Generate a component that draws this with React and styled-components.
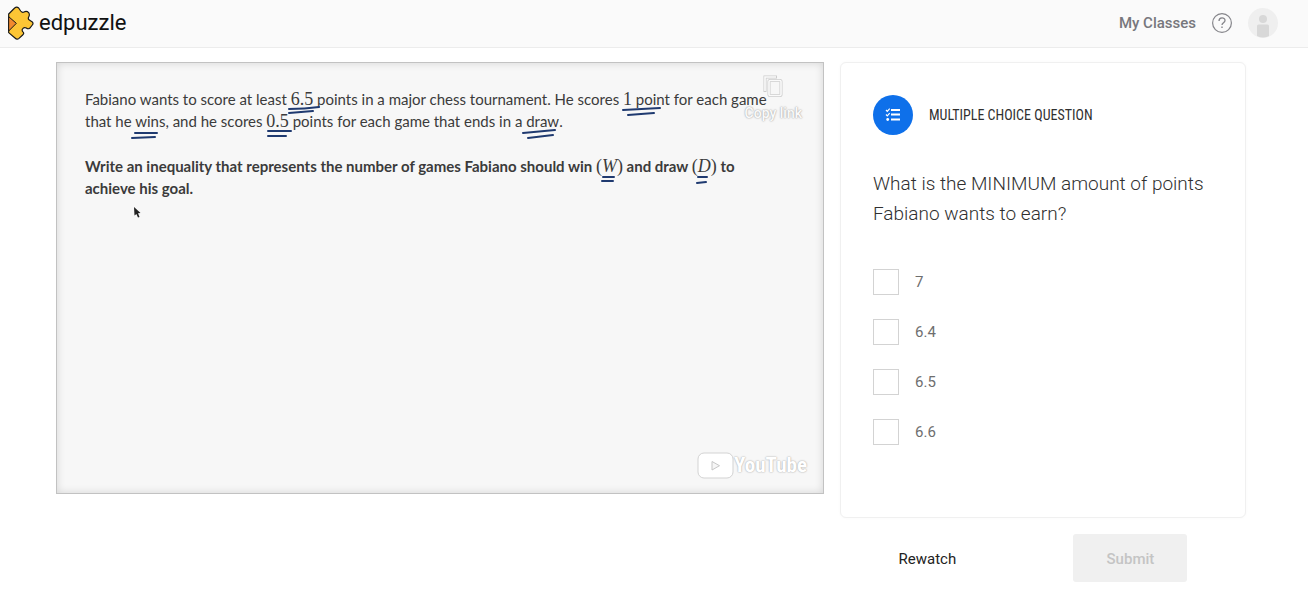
import React, { useState } from 'react';
import styled, { createGlobalStyle } from 'styled-components';

const GlobalStyle = createGlobalStyle`
  * {
    box-sizing: border-box;
  }

  body {
    margin: 0;
    background: #fff;
    color: #303030;
    font-family: Roboto, 'Liberation Sans', sans-serif;
  }
`;

const Header = styled.header`
  display: flex;
  align-items: center;
  justify-content: space-between;
  height: 48px;
  padding: 0 30px 2px 8px;
  background: #fafafa;
  border-bottom: 1px solid #ececec;
`;

const Brand = styled.a`
  display: flex;
  align-items: center;
  gap: 5px;
  color: #111;
  font-size: 22px;
  line-height: 28px;
  text-decoration: none;
`;

const Nav = styled.nav`
  display: flex;
  align-items: center;
  gap: 16px;
`;

const NavLink = styled.a`
  color: #77777d;
  font-size: 15px;
  font-weight: 500;
  text-decoration: none;
`;

const IconButton = styled.button`
  display: flex;
  padding: 0;
  border: 0;
  background: none;
  cursor: pointer;
`;

const Main = styled.main`
  display: grid;
  grid-template-columns: minmax(0, 768fr) minmax(0, 406fr);
  align-items: start;
  gap: 16px;
  padding: 14px 62px 24px 56px;
`;

const Video = styled.section`
  position: relative;
  aspect-ratio: 16 / 9;
  padding: 25px 48px 24px 28px;
  border: 1px solid #c2c2c2;
  background: #f7f7f7;
  box-shadow: inset 0 0 8px rgba(0, 0, 0, 0.14);
`;

const Problem = styled.p`
  margin: 0 0 23px;
  color: #3b3b3b;
  font-family: Lato, 'Liberation Sans', sans-serif;
  font-size: 15px;
  font-weight: ${({ $bold }) => ($bold ? 700 : 400)};
  line-height: 22px;
`;

const MathText = styled.span`
  font-family: 'Liberation Serif', serif;
  font-size: 18px;
  font-style: ${({ $italic }) => ($italic ? 'italic' : 'normal')};
  font-weight: 400;
  line-height: 1;
`;

const Marked = styled.span`
  position: relative;
  white-space: nowrap;
`;

const Pen = styled.svg`
  position: absolute;
  left: 0;
  top: 100%;
  overflow: visible;
  fill: none;
  stroke: #1f3a70;
  stroke-width: 2;
  stroke-linecap: round;
  pointer-events: none;
`;

const Pointer = styled.svg`
  position: absolute;
  left: 76px;
  top: 143px;
`;

const CopyLink = styled.button`
  position: absolute;
  top: 12px;
  right: 21px;
  display: flex;
  flex-direction: column;
  align-items: center;
  gap: 6px;
  padding: 0;
  border: 0;
  background: none;
  color: #fafafa;
  font-family: Roboto, 'Liberation Sans', sans-serif;
  font-size: 14px;
  font-weight: 500;
  line-height: 20px;
  text-shadow: 0 0 2px #a8a8a8, 0 0 1px #b4b4b4;
  cursor: pointer;
`;

const YouTube = styled.a`
  position: absolute;
  right: 16px;
  bottom: 14px;
  display: flex;
  align-items: center;
  color: #fff;
  font-family: 'Liberation Sans Narrow', 'Roboto Condensed', 'Liberation Sans', sans-serif;
  font-size: 21px;
  font-weight: 700;
  line-height: 28px;
  text-decoration: none;
  text-shadow: 0 0 2px #b0b0b0, 0 0 1px #b8b8b8;
`;

const Side = styled.form`
  display: flex;
  flex-direction: column;
  gap: 16px;
`;

const Card = styled.section`
  padding: 32px 32px 72px;
  border: 1px solid #f0f0f0;
  border-radius: 6px;
  background: #fff;
  box-shadow: 0 0 3px rgba(0, 0, 0, 0.03);
`;

const CardHeader = styled.div`
  display: flex;
  align-items: center;
  gap: 16px;
`;

const Badge = styled.span`
  display: flex;
  align-items: center;
  justify-content: center;
  width: 40px;
  height: 40px;
  border-radius: 50%;
  background: #0e70ea;
`;

const CardTitle = styled.h2`
  margin: 0;
  font-family: 'Roboto Condensed', Roboto, 'Liberation Sans', sans-serif;
  font-size: 14px;
  font-weight: 400;
  line-height: 20px;
  text-transform: uppercase;
`;

const Question = styled.p`
  margin: 34px 0 40px;
  font-size: 19px;
  font-weight: 300;
  line-height: 30px;
`;

const Choices = styled.div`
  display: flex;
  flex-direction: column;
  gap: 24px;
`;

const Choice = styled.label`
  display: flex;
  align-items: center;
  gap: 16px;
  color: #6e6e6e;
  font-size: 15px;
  line-height: 26px;
  cursor: pointer;
`;

const Tick = styled.input`
  appearance: none;
  width: 26px;
  height: 26px;
  margin: 0;
  border: 1px solid #d3d3d3;
  background: #fff;
  cursor: pointer;

  &:checked {
    border-color: #0e70ea;
    background: #0e70ea;
    box-shadow: inset 0 0 0 4px #fff;
  }
`;

const Actions = styled.div`
  display: flex;
  justify-content: space-around;
`;

const Button = styled.button`
  height: 48px;
  min-width: ${({ $filled }) => ($filled ? '114px' : '0')};
  padding: ${({ $filled }) => ($filled ? '2px 24px 0' : '2px 0 0')};
  border: 0;
  border-radius: 3px;
  background: ${({ $filled }) => ($filled ? '#f0f0f0' : 'none')};
  color: #222;
  font-family: inherit;
  font-size: 15px;
  font-weight: ${({ $filled }) => ($filled ? 500 : 400)};
  cursor: pointer;

  &:disabled {
    color: #c4c4c4;
    cursor: default;
  }
`;

const LogoIcon = () => (
  <svg width="26" height="34" viewBox="23 18 78 102" aria-hidden="true">
    <path
      d="M25 42 L43 24 Q49 19 55 24 L61 33 Q66 39 71 36 Q79 32 85 38 Q89 44 85 51 Q82 57 87 60 L96 66 Q100 70 96 75 L88 85 Q83 88 78 84 Q70 81 66 88 Q64 93 69 97 Q72 101 67 105 L56 115 Q50 120 44 114 L25 98 Z"
      fill="#fcc535"
      stroke="#171717"
      strokeWidth="3.5"
      strokeLinejoin="round"
    />
    <path d="M25 50 L48 70 L25 93 Z" fill="#f28a2e" stroke="#171717" strokeWidth="3" strokeLinejoin="round" />
  </svg>
);

const HelpIcon = () => (
  <svg width="20" height="20" viewBox="0 0 20 20" fill="none" stroke="#85858a" aria-hidden="true">
    <circle cx="10" cy="10" r="9.4" strokeWidth="1.2" />
    <path d="M7 8 C7 4 13 4 13 7.5 C13 9.7 10 9.8 10 12" strokeWidth="1.3" />
    <path d="M10 13.4 V15" strokeWidth="1.4" />
  </svg>
);

const AvatarIcon = () => (
  <svg width="30" height="30" viewBox="0 0 30 30" aria-hidden="true">
    <circle cx="15" cy="15" r="15" fill="#efefef" />
    <circle cx="15" cy="11" r="4" fill="#d8d8d8" />
    <path d="M9 18 Q9 16.5 10.5 16.5 H19.5 Q21 16.5 21 18 V28 Q15 31 9 28 Z" fill="#d8d8d8" />
  </svg>
);

const ChecklistIcon = () => (
  <svg width="16" height="14" viewBox="0 0 16 14" fill="none" stroke="#fff" aria-hidden="true">
    <path d="M6 2 H15 M6 6.5 H15 M6 11.5 H15" strokeWidth="1.8" />
    <path d="M1 2 L2.3 3.3 L4.7 0.7 M1 6.5 L2.3 7.8 L4.7 5.2" strokeWidth="1.2" />
    <circle cx="2.7" cy="11.5" r="1.4" fill="#fff" stroke="none" />
  </svg>
);

const CopyIcon = () => (
  <svg width="20" height="22" viewBox="0 0 20 22" fill="none" aria-hidden="true">
    <path d="M2 17 V2 H14" stroke="#cccccc" strokeWidth="3" />
    <path d="M2 16 V2 H13" stroke="#fafafa" strokeWidth="1.6" />
    <rect x="6" y="5.5" width="12" height="15" rx="1" stroke="#cccccc" strokeWidth="3" />
    <rect x="6" y="5.5" width="12" height="15" rx="1" stroke="#fafafa" strokeWidth="1.6" />
  </svg>
);

const PlayIcon = () => (
  <svg width="37" height="27" viewBox="0 0 37 27" aria-hidden="true">
    <rect x="1" y="1" width="35" height="25" rx="6" fill="#fff" stroke="#d3d3d3" />
    <path d="M15 9.5 V18 L22.5 13.7 Z" fill="#f6f6f6" stroke="#c6c6c6" />
  </svg>
);

// Word with two hand-drawn strokes under it
const Underlined = ({ strokes, children }) => (
  <Marked>
    {children}
    <Pen width="40" height="10" aria-hidden="true">
      <path d={strokes} />
    </Pen>
  </Marked>
);

const answers = ['7', '6.4', '6.5', '6.6'];

const App = () => {
  const [selected, setSelected] = useState([]);

  const toggle = (answer) => {
    setSelected((prev) =>
      prev.includes(answer) ? prev.filter((a) => a !== answer) : [...prev, answer]
    );
  };

  return (
    <>
      <GlobalStyle />
      <Header>
        <Brand href="#">
          <LogoIcon />
          edpuzzle
        </Brand>
        <Nav>
          <NavLink href="#">My Classes</NavLink>
          <IconButton type="button" aria-label="Help">
            <HelpIcon />
          </IconButton>
          <IconButton type="button" aria-label="Account">
            <AvatarIcon />
          </IconButton>
        </Nav>
      </Header>

      <Main>
        <Video>
          <Problem>
            Fabiano wants to score at least{' '}
            <Underlined strokes="M-2 1 Q14 1 28 -1 M-2 5 L22 3">
              <MathText>6.5</MathText>
            </Underlined>{' '}
            points in a major chess tournament. He scores{' '}
            <Underlined strokes="M0 2 L37 0 M5 7 L31 5">
              <MathText>1</MathText> point
            </Underlined>{' '}
            for each game that he{' '}
            <Underlined strokes="M0 3 L22 3 M-3 8 L20 7">wins</Underlined>, and he scores{' '}
            <Underlined strokes="M2 1 L25 1 M2 6 L20 6">
              <MathText>0.5</MathText>
            </Underlined>{' '}
            points for each game that ends in a{' '}
            <Underlined strokes="M-3 3 L29 0 M2 8 L27 5">draw</Underlined>.
          </Problem>
          <Problem $bold>
            Write an inequality that represents the number of games Fabiano should win{' '}
            <MathText>(</MathText>
            <Underlined strokes="M1 2 L12 2 M0 6 L11 6">
              <MathText $italic>W</MathText>
            </Underlined>
            <MathText>)</MathText> and draw <MathText>(</MathText>
            <Underlined strokes="M0 2 L9 2 M-1 8 L8 7">
              <MathText $italic>D</MathText>
            </Underlined>
            <MathText>)</MathText> to achieve his goal.
          </Problem>
          <Pointer width="9" height="13" viewBox="0 0 9 13" aria-hidden="true">
            <path d="M1 1 L7.5 7 L5 7.3 L6.5 11 L5 11.5 L3.4 8 L1.5 9.5 Z" fill="#222" />
          </Pointer>
          <CopyLink type="button">
            <CopyIcon />
            Copy link
          </CopyLink>
          <YouTube href="#">
            <PlayIcon />
            YouTube
          </YouTube>
        </Video>

        <Side onSubmit={(e) => e.preventDefault()}>
          <Card>
            <CardHeader>
              <Badge>
                <ChecklistIcon />
              </Badge>
              <CardTitle>Multiple choice question</CardTitle>
            </CardHeader>
            <Question>What is the MINIMUM amount of points Fabiano wants to earn?</Question>
            <Choices>
              {answers.map((answer) => (
                <Choice key={answer}>
                  <Tick
                    type="checkbox"
                    checked={selected.includes(answer)}
                    onChange={() => toggle(answer)}
                  />
                  {answer}
                </Choice>
              ))}
            </Choices>
          </Card>
          <Actions>
            <Button type="button">Rewatch</Button>
            <Button type="submit" $filled disabled={selected.length === 0}>
              Submit
            </Button>
          </Actions>
        </Side>
      </Main>
    </>
  );
};

export default App;
